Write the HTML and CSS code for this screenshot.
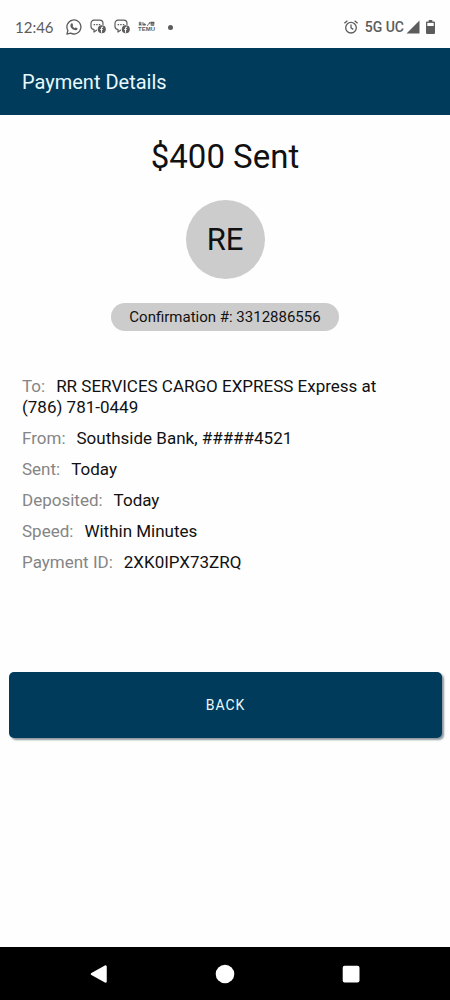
FILE: index.html
```html
<!DOCTYPE html>
<html lang="en">
<head>
<meta charset="utf-8">
<meta name="viewport" content="width=device-width, initial-scale=1">
<title>Payment Details</title>
<link rel="stylesheet" href="styles.css">
</head>
<body>
<div class="screen">
  <div class="status-bar">
    <div class="status-left">
      <time class="clock">12:46</time>
      <svg class="icon" viewBox="0 0 16 16" aria-hidden="true">
        <path d="M.9 15.1l1-3.600A7 7 0 1 1 4.600 14.100z" fill="none" stroke="currentColor" stroke-width="1.300" stroke-linejoin="round"/>
        <path d="M5.300 4.500c.4-.4.900-.4 1.100 0l.7 1.400c.1.400-.1.700-.6 1.200.5.900 1.200 1.600 2.200 2.100.5-.6.700-.9 1.100-.7l1.500.7c.4.300.2 1.100-.3 1.500-.8.700-1.900.6-3.200.1-1.700-.8-2.900-2.200-3.300-3.400-.3-1.200.2-2.300.8-2.900z" fill="currentColor"/>
      </svg>
      <svg class="icon" viewBox="0 0 16 16" aria-hidden="true">
        <path d="M6.500 11.200L4 13v-2.300c-1.800-.4-3-1.600-3-3.200V4.400C1 2.400 2.200 1.200 4.200 1.200h5.600c2 0 3.200 1.200 3.200 3.200v1" fill="none" stroke="currentColor" stroke-width="1.200" stroke-linecap="round" stroke-linejoin="round"/>
        <path d="M3.600 5.700h1.500M6.200 5.700h1.500M8.800 5.700h1.500" stroke="currentColor" stroke-width="1.300"/>
        <circle cx="11.800" cy="10.200" r="4" fill="currentColor"/>
        <path d="M13.200 8.200c-1.200-.2-1.700.2-1.700 1.300v4.200M10.300 10.500h2.500" fill="none" stroke="#fff" stroke-width="1.100"/>
      </svg>
      <svg class="icon" viewBox="0 0 16 16" aria-hidden="true">
        <path d="M6.500 11.200L4 13v-2.300c-1.800-.4-3-1.600-3-3.200V4.400C1 2.400 2.200 1.200 4.200 1.200h5.600c2 0 3.200 1.200 3.200 3.200v1" fill="none" stroke="currentColor" stroke-width="1.200" stroke-linecap="round" stroke-linejoin="round"/>
        <path d="M3.600 5.700h1.500M6.200 5.700h1.500M8.800 5.700h1.500" stroke="currentColor" stroke-width="1.300"/>
        <circle cx="11.800" cy="10.200" r="4" fill="currentColor"/>
        <path d="M13.200 8.200c-1.200-.2-1.700.2-1.700 1.300v4.200M10.300 10.500h2.500" fill="none" stroke="#fff" stroke-width="1.100"/>
      </svg>
      <svg class="icon temu" viewBox="0 0 17 16" aria-label="TEMU">
        <path d="M.7 4h3M2 2.800v3.400M.8 6.300l1.200-1 1.600 1M5 3.200v3M6.300 4.500l1.500 1.700M5 5.900h2.600M9 6.200h1.200M10.500 5.500l1.500-2.300M13 3.400h2.800v1.500H13zM12.800 6.200h3.400" fill="none" stroke="currentColor" stroke-width="1.100"/>
        <text x="0" y="12" class="temu-text">TEMU</text>
      </svg>
      <span class="dot"></span>
    </div>
    <div class="status-right">
      <svg class="icon alarm" viewBox="0 0 16 16" aria-hidden="true">
        <circle cx="8" cy="8.700" r="5.300" fill="none" stroke="currentColor" stroke-width="1.300"/>
        <path d="M1.400 4.300l3-2.500M14.600 4.300l-3-2.500M8 5.500v3.400l2.300 1.500" fill="none" stroke="currentColor" stroke-width="1.300"/>
      </svg>
      <span class="network">5G UC</span>
      <svg class="signal" viewBox="0 0 14 14" aria-hidden="true"><path d="M13.500.5v13H.5z" fill="currentColor"/></svg>
      <svg class="battery" viewBox="0 0 9 14" aria-hidden="true">
        <path d="M2.700 0h3.600v1.500H8a1 1 0 0 1 1 1V13a1 1 0 0 1-1 1H1a1 1 0 0 1-1-1V2.500a1 1 0 0 1 1-1h1.700z" fill="currentColor"/>
        <path d="M1.300 2.900h6.400V6H1.300z" fill="#fff"/>
      </svg>
    </div>
  </div>
  <header class="app-bar"><h1 class="app-title">Payment Details</h1></header>
  <main class="content">
    <section class="summary">
      <h2 class="amount">$400 Sent</h2>
      <div class="avatar">RE</div>
      <p class="confirmation">Confirmation #: 3312886556</p>
    </section>
    <dl class="details">
      <div class="row"><dt>To:</dt><dd>RR SERVICES CARGO EXPRESS Express at (786) 781-0449</dd></div>
      <div class="row"><dt>From:</dt><dd>Southside Bank, #####4521</dd></div>
      <div class="row"><dt>Sent:</dt><dd>Today</dd></div>
      <div class="row"><dt>Deposited:</dt><dd>Today</dd></div>
      <div class="row"><dt>Speed:</dt><dd>Within Minutes</dd></div>
      <div class="row"><dt>Payment ID:</dt><dd>2XK0IPX73ZRQ</dd></div>
    </dl>
    <button class="back" type="button">BACK</button>
  </main>
  <nav class="nav-bar" aria-label="System navigation">
    <button class="nav-button" type="button" aria-label="Back"><svg viewBox="0 0 20 20"><path d="M16.500 2.500v15L3 10z" fill="#fff" stroke="#fff" stroke-width="2.500" stroke-linejoin="round"/></svg></button>
    <button class="nav-button" type="button" aria-label="Home"><svg viewBox="0 0 20 20"><circle cx="10" cy="10" r="9.300" fill="#fff"/></svg></button>
    <button class="nav-button" type="button" aria-label="Recent apps"><svg viewBox="0 0 20 20"><rect x="1.700" y="1.700" width="16.800" height="16.800" rx="2" fill="#fff"/></svg></button>
  </nav>
</div>
</body>
</html>
```
FILE: styles.css
```css
* { box-sizing: border-box; }

body {
  margin: 0;
  background: #fefefe;
  color: #111;
  font-family: Roboto, sans-serif;
}

.screen {
  display: flex;
  flex-direction: column;
  min-height: 100vh;
}

.status-bar {
  display: flex;
  justify-content: space-between;
  padding: 6px 15px 0;
  height: 48px;
  color: #5c5c5c;
}

.status-left,
.status-right {
  display: flex;
  align-items: center;
}

.status-left { gap: 8px; }

.clock {
  margin-right: 4px;
  font: 15px/20px Lato, sans-serif;
}

.icon { width: 16px; height: 16px; }
.temu { width: 17px; }
.temu-text { font: bold 6px "Liberation Sans", sans-serif; fill: currentColor; }

.dot {
  width: 5px;
  height: 5px;
  margin-left: 5px;
  border-radius: 50%;
  background: currentColor;
}

.alarm { margin-right: 6px; }
.network { font-size: 14px; font-weight: 500; line-height: 20px; }
.signal { width: 14px; height: 14px; margin: 0 6px 0 2px; }
.battery { width: 9px; height: 14px; }

.app-bar {
  display: flex;
  align-items: center;
  height: 67px;
  padding: 0 22px;
  background: #003b5c;
}

.app-title {
  margin: 0;
  color: #e9f8fb;
  font-size: 20px;
  font-weight: 400;
  line-height: 24px;
}

.content {
  display: flex;
  flex: 1;
  flex-direction: column;
}

.summary {
  display: flex;
  flex-direction: column;
  align-items: center;
  padding-top: 22px;
}

.amount {
  margin: 0;
  font-size: 33px;
  font-weight: 400;
  line-height: 40px;
}

.avatar {
  display: grid;
  place-items: center;
  width: 79px;
  height: 79px;
  margin-top: 23px;
  border-radius: 50%;
  background: #ccc;
  font-size: 31px;
}

.confirmation {
  margin: 24px 0 0;
  padding: 0 18px;
  border-radius: 14px;
  background: #ccc;
  font-size: 15px;
  line-height: 28px;
}

.details {
  display: grid;
  gap: 10px;
  margin: 0;
  padding: 45px 40px 0 22px;
  font-size: 17px;
  line-height: 21px;
}

.row dt,
.row dd { display: inline; margin: 0; }
.row dt { margin-right: 11px; color: #858585; }

.back {
  height: 66px;
  margin: 99px 8px 0 9px;
  border: 0;
  border-radius: 5px;
  background: #003b5c;
  box-shadow: 2px 2px 2px #8c979d;
  color: #e9f8fb;
  font: 14px/20px Roboto, sans-serif;
  letter-spacing: 1px;
}

.nav-bar {
  display: grid;
  grid-template-columns: repeat(3, 1fr);
  align-items: center;
  height: 53px;
  padding: 0 8%;
  background: #000;
}

.nav-button {
  display: grid;
  place-items: center;
  padding: 0;
  border: 0;
  background: none;
}

.nav-button svg { width: 20px; height: 20px; }
```
